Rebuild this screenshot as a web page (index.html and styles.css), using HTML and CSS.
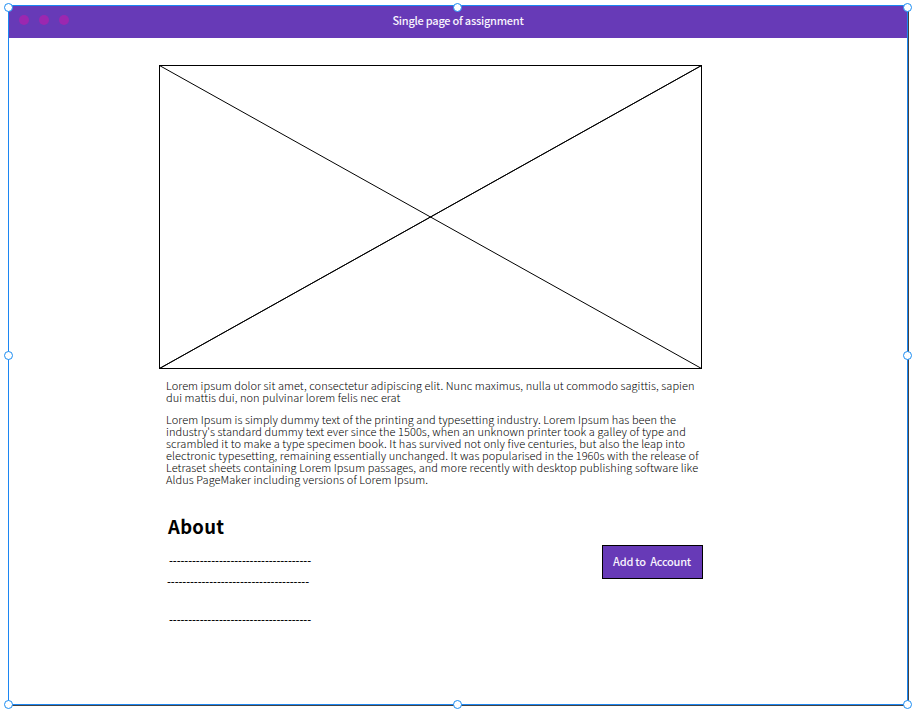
FILE: index.html
```html
<!DOCTYPE html>
<html lang="en">
<head>
<meta charset="utf-8">
<title>Single page of assignment</title>
<link rel="stylesheet" href="styles.css">
</head>
<body>
<div class="window">
  <header class="titlebar">
    <div class="dots"><i class="dot"></i><i class="dot"></i><i class="dot"></i></div>
    <h1 class="title">Single page of assignment</h1>
  </header>
  <main class="content">
    <svg class="placeholder" width="543" height="304" viewBox="0 0 543 304"><rect x=".5" y=".5" width="542" height="303"/><path d="M.5.5l542 303M.5 303.5l542-303"/><path d="M.5 303.5l542-303"/></svg>
    <p class="copy intro">Lorem ipsum dolor sit amet, consectetur adipiscing elit. Nunc maximus, nulla ut commodo sagittis, sapien<br>dui mattis dui, non pulvinar lorem felis nec erat</p>
    <p class="copy">Lorem Ipsum is simply dummy text of the printing and typesetting industry. Lorem Ipsum has been the<br>industry's standard dummy text ever since the 1500s, when an unknown printer took a galley of type and<br>scrambled it to make a type specimen book. It has survived not only five centuries, but also the leap into<br>electronic typesetting, remaining essentially unchanged. It was popularised in the 1960s with the release of<br>Letraset sheets containing Lorem Ipsum passages, and more recently with desktop publishing software like<br>Aldus PageMaker including versions of Lorem Ipsum.</p>
    <div class="details">
      <section class="about">
        <h2 class="heading">About</h2>
        <p class="rule">-------------------------------------</p>
        <p class="rule rule-second">-------------------------------------</p>
        <p class="rule rule-third">-------------------------------------</p>
      </section>
      <button class="add">Add to&nbsp; Account</button>
    </div>
  </main>
  <i class="handle top left"></i><i class="handle top center"></i><i class="handle top right"></i>
  <i class="handle middle left"></i><i class="handle middle right"></i>
  <i class="handle bottom left"></i><i class="handle bottom center"></i><i class="handle bottom right"></i>
</div>
</body>
</html>
```
FILE: styles.css
```css
* { box-sizing: border-box; }
body { margin: 0; padding: 5px 0 0 8px; height: 709px; background: #fff; font-family: "Noto Sans CJK SC", "Noto Sans", sans-serif; }
.window { position: relative; display: flow-root; width: 900px; height: 700px; border: 1px solid #1c86f2; box-shadow: 1px 1px 0 #444; }
.titlebar { display: flex; align-items: center; height: 32px; background: #673ab7; }
.dots { display: flex; flex: none; gap: 10px; width: 62px; margin: -4px 0 0 10.4px; }
.dot { width: 10px; height: 10px; border-radius: 50%; background: #9c27b0; }
.title { flex: 1; margin: -4px 72.4px 0 0; text-align: center; color: #f8f4fd; font-size: 11px; line-height: 16px; font-weight: 500; letter-spacing: -.24px; white-space: nowrap; }
.content { width: 545px; margin: 27px 0 0 150px; }
.placeholder { display: block; fill: none; stroke: #000; stroke-width: 1; }
.copy { margin: 10px 0 0 7px; font-size: 11px; line-height: 12px; font-weight: 300; letter-spacing: .065px; color: #000; white-space: nowrap; }
.intro { margin-top: 10px; letter-spacing: .055px; }
.details { display: flex; justify-content: space-between; margin-left: 8px; }
.about { width: 145px; padding-top: 28px; }
.heading { margin: 0 0 15px 1px; font-size: 18.5px; line-height: 26px; font-weight: 700; letter-spacing: .3px; color: #000; }
.rule { margin: 0 0 0 2px; font-size: 11px; line-height: 12px; font-weight: 500; letter-spacing: -.09px; color: #000; white-space: nowrap; }
.rule-second { margin: 9px 0 0 0; }
.rule-third { margin-top: 26px; }
.add { width: 101px; height: 34px; margin: 60px 1px 0 0; padding: 0 1px 2px 0; border: 1px solid #000; background: #673ab7; color: #f8f4fd; font: 500 11px/16px "Noto Sans CJK SC", sans-serif; letter-spacing: -.25px; white-space: nowrap; }
.handle { position: absolute; width: 9px; height: 9px; border: 1px solid #1c8df2; border-radius: 50%; background: #fff; }
.top { top: -3px; }
.middle { top: 345px; }
.bottom { bottom: -5px; }
.left { left: -5px; }
.center { left: 444px; }
.right { right: -5px; }
```
